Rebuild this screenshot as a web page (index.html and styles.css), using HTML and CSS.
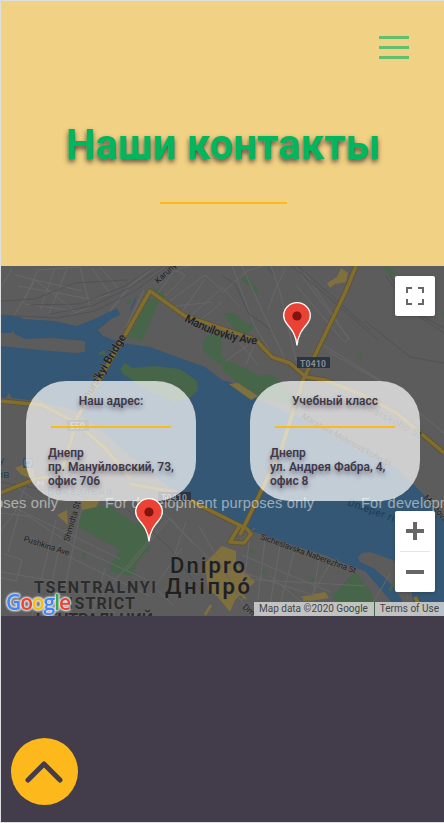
FILE: index.html
```html
<!DOCTYPE html>
<html lang="ru">
<head>
<meta charset="utf-8">
<title>Наши контакты</title>
<link rel="stylesheet" href="styles.css">
</head>
<body>
<div class="page">
  <header class="hero">
    <button class="burger" aria-label="Меню"><span></span><span></span><span></span></button>
    <h1 class="title">Наши контакты</h1>
    <div class="rule"></div>
  </header>
  <section class="map">
    <svg class="map-canvas" viewBox="1 266 443 350" preserveAspectRatio="none">
      <rect x="0" y="266" width="444" height="350" fill="#5c5c5c"/>
      <!-- river -->
      <path class="water" d="M0 315L20 317 23 319 55 321 76 326 95 319 117 308 120 315 111 319 98 330 103 336 122 343 150 347 180 358 205 367 222 380 240 385 257 399 290 414 330 430 370 450 400 471 422 493 444 519V616H402L388 598 365 571 350 566 327 556 295 546 251 531 222 519 190 501 150 473 108 436 75 410 44 403 36 395 30 400 12 398 9 393 6 398 0 397Z"/>
      <path class="land" d="M0 333L12 333 12 330 15 334 25 339 52 338 85 341 85 352 75 353 40 350 0 346ZM358 557L362 553 370 552 393 560 401 569 410 585 416 616H400L402 600 390 583 375 569 360 562Z"/>
      <path class="water" d="M130 309L137 295 135 303 130 311ZM266 266L272 272 274 276ZM104 523L112 522 124 531 119 532Z"/>
      <!-- parks -->
      <path class="park" d="M148 300L160 299 142 341 128 337ZM153 289L163 292 165 297 158 296ZM126 304L132 297 130 304ZM120 369L125 363 133 368 155 366 180 369 197 381 198 390 190 398 175 402 150 392 123 374ZM97 354L104 350 106 355ZM203 340L215 330 222 334 222 365 213 360 203 350ZM222 313L234 313 245 322 255 327 246 334 235 330ZM222 358L250 371 258 376 272 374 292 393 325 397 300 405 255 398 222 369ZM245 275L258 290 258 294 242 280ZM386 266L398 273 391 276 384 268ZM440 309L444 313V317ZM358 360L364 345 362 355ZM360 357L364 358 361 361ZM80 517L85 507 110 506 124 516 135 524 143 521 150 549 139 559 120 550 78 527ZM111 564L120 550 140 557 132 576 110 572ZM82 554L85 550 84 561ZM332 596L350 577 356 573 370 590 380 616H345ZM308 581L318 576 313 582ZM260 570L268 571 262 573ZM248 547L257 553 250 552ZM83 613L88 616H80ZM388 590L394 580 391 591Z"/>
      <!-- settlements -->
      <path class="built" d="M327 283L337 277 341 268 348 273 346 282 335 284 330 288ZM229 384L238 383 258 396 251 400ZM15 468L25 464 34 469 34 480 22 475ZM57 515L67 510 68 525ZM80 501L100 499 96 507 82 510ZM205 563L222 546 236 551 236 563 255 582 235 600 230 612 217 596 208 590ZM300 597L325 592 329 598 310 601Z"/>
      <!-- minor streets -->
      <g class="street">
        <path d="M1 287L12 269M14 316L35 280 75 311 25 304M23 303L38 270 80 267 90 307 70 315M15 275L82 291M18 286L90 299M55 268L40 310M67 269L49 313M92 268L110 294 90 300M100 267L118 288"/>
        <path d="M155 297L175 270 185 275 175 287 165 296M175 270L190 266M170 301L205 275 222 290M176 306L213 302M181 313L205 279M188 318L220 290M195 325L222 302M222 293L247 271 262 266M222 287L240 307M242 266L260 306 285 359M232 266L255 327 276 361M285 269L275 290 268 310M271 266L280 292 296 360M248 345L226 361M238 341L258 365M256 340L246 365M296 268L350 340M304 271L340 326 349 339 344 342 296 285M320 343L380 380 444 433M329 352L390 387"/>
        <path d="M0 513L28 516 75 547 145 579 173 605M32 470L15 512 1 530M12 484L43 506 60 500M0 501L65 532 120 559M56 520L32 616M21 506L8 552M82 505L65 587M60 544L45 616M105 568L92 616M28 537L150 596M1 572L60 582 115 613M5 554L22 560 16 581 1 578M126 571L170 518 193 543M154 504L226 575 250 616M166 519L124 570 99 600M186 522L171 565M182 548L150 594M199 526L230 580M234 545L255 528M250 535L242 600M265 539L258 600M280 546L270 605M294 552L278 612M319 559L310 616M331 562L301 614M242 555L330 592M222 566L310 594M243 579L365 586M390 574L365 616M270 576L310 609"/>
      </g>
      <path class="street soft" d="M155 266L130 286 110 311M144 290L126 328"/>
      <path class="rail" d="M169 266L135 291 95 311 57 318 0 315M163 266L129 288 92 306 50 314M155 266L125 286 80 304 30 305M1 301L35 299 75 283 128 280M292 266L335 303 378 340M298 266L370 330M222 276L235 284 249 314 270 329M385 275L410 310 444 328M390 275L412 312 444 333M365 321L410 357 444 363M0 482L45 490 120 503 167 545 200 589"/>
      <!-- highways -->
      <g class="road-edge"><path d="M0 401L42 405 75 422 105 448 130 478M70 430L124 337 150 291 185 316 256 340 272 357 290 363 306 377 325 380 365 396 398 414 444 453M356 266L345 293 303 380 281 450 240 535M0 493L35 479 60 475M75 428L60 475M130 484L175 492 203 507 247 529 251 534 244 543 230 542 239 527M415 597L425 616"/></g>
      <g class="road"><path d="M0 401L42 405 75 422 105 448 130 478M70 430L124 337 150 291 185 316 256 340 272 357 290 363 306 377 325 380 365 396 398 414 444 453M356 266L345 293 303 380 281 450 240 535M0 493L35 479 60 475M75 428L60 475M130 484L175 492 203 507 247 529 251 534 244 543 230 542 239 527M415 597L425 616"/></g>
      <path class="main-street" d="M208 567L228 580 246 599M216 558L237 571M222 547L227 604M224 597L244 577M303 600L325 596M205 615L211 605"/>
      <!-- labels -->
      <text class="label small" transform="translate(158 284) rotate(-43)">Karuny</text>
      <path id="ave" fill="none" d="M184 321C205 332 229 343 264 345"/>
      <text class="label road-name"><textPath href="#ave" textLength="77">Manuilovkiy Ave</textPath></text>
      <text class="label road-name" transform="translate(83 409) rotate(-59)" textLength="84">Amurs'kyi Bridge</text>
      <text class="label small" transform="translate(69 542) rotate(-74)">Shmidta St</text>
      <text class="label small" transform="translate(23 541) rotate(18)" textLength="48">Pushkina Ave</text>
      <text class="label small" transform="translate(260 539) rotate(20)" textLength="101">Sicheslavska Naberezhna St</text>
      <text class="label small" transform="translate(301 418) rotate(29)" textLength="101">Marshala Malynovs'koho St</text>
      <text class="label muted" transform="translate(362 408) rotate(28)" textLength="65">ubarskoho St</text>
      <text class="label river" transform="translate(347 505) rotate(20)">Dnieper river</text>
      <text class="label small" transform="translate(423 498) rotate(49)">Mostova</text>
      <text class="label small" transform="translate(242 608) rotate(39)">Dmytra</text>
      <text class="label station" x="-1" y="464">у</text><text class="label station" x="-6" y="478">ків</text>
      <text class="label station" x="47" y="481">Vokzalna</text><text class="label station" x="47" y="495" textLength="65">Вокзальна</text>
      <rect x="23" y="458" width="10" height="10" rx="1" fill="#2d526c"/><path d="M25 460h6v5h-6zM26 467l1-2m3 2-1-2" fill="none" stroke="#768797"/>
      <rect x="36" y="479" width="9" height="9" fill="#695252"/><path d="M38 486v-5l2.500 3 2.500-3v5" fill="none" stroke="#999"/>
      <text class="label city" x="170" y="573" textLength="75">Dnipro</text>
      <text class="label city" x="165" y="594" textLength="85">Дніпро́</text>
      <text class="label district" x="34" y="593" textLength="122">TSENTRALNYI</text>
      <text class="label district" x="57" y="609" textLength="78">DISTRICT</text>
      <text class="label district" x="36" y="625" textLength="117">ЦЕНТРАЛЬНИЙ</text>
      <rect x="297" y="357" width="33" height="11" fill="#293544"/><text class="shield" x="300" y="366.5" textLength="26">T0410</text>
      <rect x="67" y="420" width="22" height="11" fill="#3a483f"/><text class="shield" x="70" y="429">E50</text>
      <rect x="158" y="492" width="33" height="10" fill="#293544"/><text class="shield" x="161" y="500.5" textLength="26">T0410</text>
      <text class="notice" x="-151" y="508" textLength="209">For development purposes only</text>
      <text class="notice" x="105" y="508" textLength="209">For development purposes only</text>
      <text class="notice" x="361" y="508" textLength="209">For development purposes only</text>
    </svg>
    <article class="card card-office">
      <h2>Наш адрес:</h2>
      <div class="card-rule"></div>
      <p>Днепр<br>пр. Мануйловский, 73,<br>офис 706</p>
    </article>
    <article class="card card-class">
      <h2>Учебный класс</h2>
      <div class="card-rule"></div>
      <p>Днепр<br>ул. Андрея Фабра, 4,<br>офис 8</p>
    </article>
    <svg class="pin pin-class" viewBox="0 0 28 45"><path d="M14 43.5C13 33 9 28 4 22 1.500 19 .7 16.500 .7 13.500A13.300 12.800 0 0 1 27.300 13.500C27.300 16.500 26.500 19 24 22 19 28 15 33 14 43.500Z"/><circle cx="14" cy="14" r="4.600"/></svg>
    <svg class="pin pin-office" viewBox="0 0 28 45"><path d="M14 43.5C13 33 9 28 4 22 1.500 19 .7 16.500 .7 13.500A13.300 12.800 0 0 1 27.300 13.500C27.300 16.500 26.500 19 24 22 19 28 15 33 14 43.500Z"/><circle cx="14" cy="14" r="4.600"/></svg>
    <button class="control fullscreen" aria-label="На весь экран"><svg viewBox="0 0 18 18"><path d="M1 6V1h5M12 1h5v5M17 12v5h-5M6 17H1v-5"/></svg></button>
    <div class="control zoom">
      <button aria-label="Увеличить"><svg viewBox="0 0 18 18"><path class="thick" d="M0 9h18M9 0v18"/></svg></button>
      <button aria-label="Уменьшить"><svg viewBox="0 0 18 18"><path class="thick" d="M0 9h18"/></svg></button>
    </div>
    <div class="google"><span class="b">G</span><span class="r">o</span><span class="y">o</span><span class="b">g</span><span class="g">l</span><span class="r">e</span></div>
    <div class="attribution"><span>Map data ©2020 Google</span><span>Terms of Use</span></div>
  </section>
  <footer class="footer">
    <button class="to-top" aria-label="Наверх"><svg viewBox="0 0 67 67"><path d="M17 42L33 26 49 42"/></svg></button>
  </footer>
</div>
</body>
</html>
```
FILE: styles.css
```css
* { box-sizing: border-box; }
body { margin: 0; font-family: Roboto, "Liberation Sans", sans-serif; }
button { border: 0; padding: 0; background: none; }
.page { height: 823px; overflow: hidden; display: flex; flex-direction: column; border: solid #dedfe1; border-width: 1px 0 1px 1px; }
.hero { height: 265px; flex: none; background: #f1d183; display: flex; flex-direction: column; align-items: center; padding-top: 35px; }
.burger { align-self: flex-end; margin-right: 35px; width: 30px; height: 23px; display: flex; flex-direction: column; justify-content: space-between; }
.burger span { display: block; height: 3px; background: #60c070; }
.title { margin: 61px 0 0 1px; font-size: 42px; line-height: 50px; font-weight: 700; color: #02b55f; text-shadow: 0 3px 5px rgba(60, 40, 40, .8); white-space: nowrap; }
.rule { width: 127px; height: 2px; margin: 32px 0 0 1px; background: #fdb91c; }
.map { position: relative; height: 350px; flex: none; overflow: hidden; display: flex; justify-content: space-between; align-items: flex-start; padding: 115px 24px 0 25px; }
.map-canvas { position: absolute; inset: 0; width: 100%; height: 100%; }
.water { fill: #335775; }
.land { fill: #5c5c5c; }
.park { fill: #476549; }
.built { fill: #80703e; }
.street { fill: none; stroke: #686868; stroke-width: 1; }
.soft { stroke-width: 2; stroke: #656565; }
.rail { fill: none; stroke: #505257; stroke-width: 1; }
.road-edge { fill: none; stroke: #5d512d; stroke-width: 5; stroke-linejoin: round; }
.road { fill: none; stroke: #816e2e; stroke-width: 3.6; stroke-linejoin: round; }
.main-street { fill: none; stroke: #80703e; stroke-width: 2.5; }
.label { fill: #202020; paint-order: stroke; stroke: #646464; stroke-width: 1px; font-family: Roboto, sans-serif; }
.small { font-size: 8.5px; }
.road-name { font-size: 11.3px; font-weight: 500; }
.muted { font-size: 10px; fill: #343434; }
.river { font-size: 10.5px; fill: #203b53; stroke: none; letter-spacing: .5px; }
.station { font-size: 11.5px; fill: #244153; }
.city { font-size: 22px; font-weight: 500; }
.district { font-size: 16px; font-weight: 700; fill: #2c2d2e; }
.shield { font: 700 8.5px Roboto, sans-serif; fill: #898c8d; }
.notice { font: 14.7px "Liberation Sans", sans-serif; fill: rgba(255, 255, 255, .5); }
.card { position: relative; width: 170px; height: 120px; border-radius: 40px; background: rgba(255, 255, 255, .7); color: #40394a; padding: 13px 20px 0 22px; font-size: 12px; line-height: 14px; text-shadow: 0 3px 4px rgba(55, 45, 65, .5); }
.card h2 { margin: 0 2px 0 0; font: inherit; font-weight: 600; text-align: center; }
.card-rule { width: 120px; height: 2px; margin: 18px 0 18px 3px; background: #fdb91c; }
.card p { margin: 0; font-weight: 600; white-space: nowrap; }
.card-class { padding-left: 20px; }
.card-class h2 { margin-right: 0; }
.card-class .card-rule { margin-left: 5px; }
.pin { position: absolute; width: 28px; height: 45px; }
.pin path { fill: #ea4335; stroke: #fff; stroke-width: 1.3; }
.pin circle { fill: #811411; }
.pin-class { left: 282px; top: 36px; }
.pin-office { left: 134px; top: 232px; }
.control { position: absolute; right: 9px; width: 40px; background: #fff; border-radius: 2px; box-shadow: 0 1px 4px -1px rgba(0, 0, 0, .3); }
.control svg { width: 18px; height: 18px; display: block; }
.control path { fill: none; stroke: #666; stroke-width: 2; }
.control .thick { stroke-width: 4; }
.fullscreen { top: 10px; height: 40px; display: grid; place-items: center; }
.zoom { top: 245px; height: 81px; padding: 0 5px; }
.zoom button { width: 30px; height: 40px; display: grid; place-items: center; }
.zoom button + button { height: 41px; border-top: 1px solid #e6e6e6; }
.google { position: absolute; left: 5px; bottom: 2px; font: 600 21px/24px "Open Sans", sans-serif; letter-spacing: -1.1px; filter: drop-shadow(0 0 .8px #ddd) drop-shadow(0 0 .8px #ddd) drop-shadow(0 0 .5px #ddd); }
.google .b { color: #4285f4; }
.google .r { color: #ea4335; }
.google .y { color: #fbbc05; }
.google .g { color: #34a853; }
.attribution { position: absolute; right: 0; bottom: 0; width: 190px; height: 14px; display: flex; gap: 1px; font: 10px/14px Roboto, sans-serif; color: #444; white-space: nowrap; }
.attribution span { background: rgba(220, 220, 220, .8); padding: 0 5px; }
.attribution span:first-child { width: 120px; }
.attribution span:last-child { flex: 1; }
.footer { flex: 1; background: #433c4a; padding: 122px 0 0 10px; }
.to-top { width: 67px; height: 67px; border-radius: 50%; background: #fdb91c; display: block; }
.to-top svg { width: 67px; height: 67px; display: block; }
.to-top path { fill: none; stroke: #433c4a; stroke-width: 5; stroke-linecap: round; stroke-linejoin: round; }
```
